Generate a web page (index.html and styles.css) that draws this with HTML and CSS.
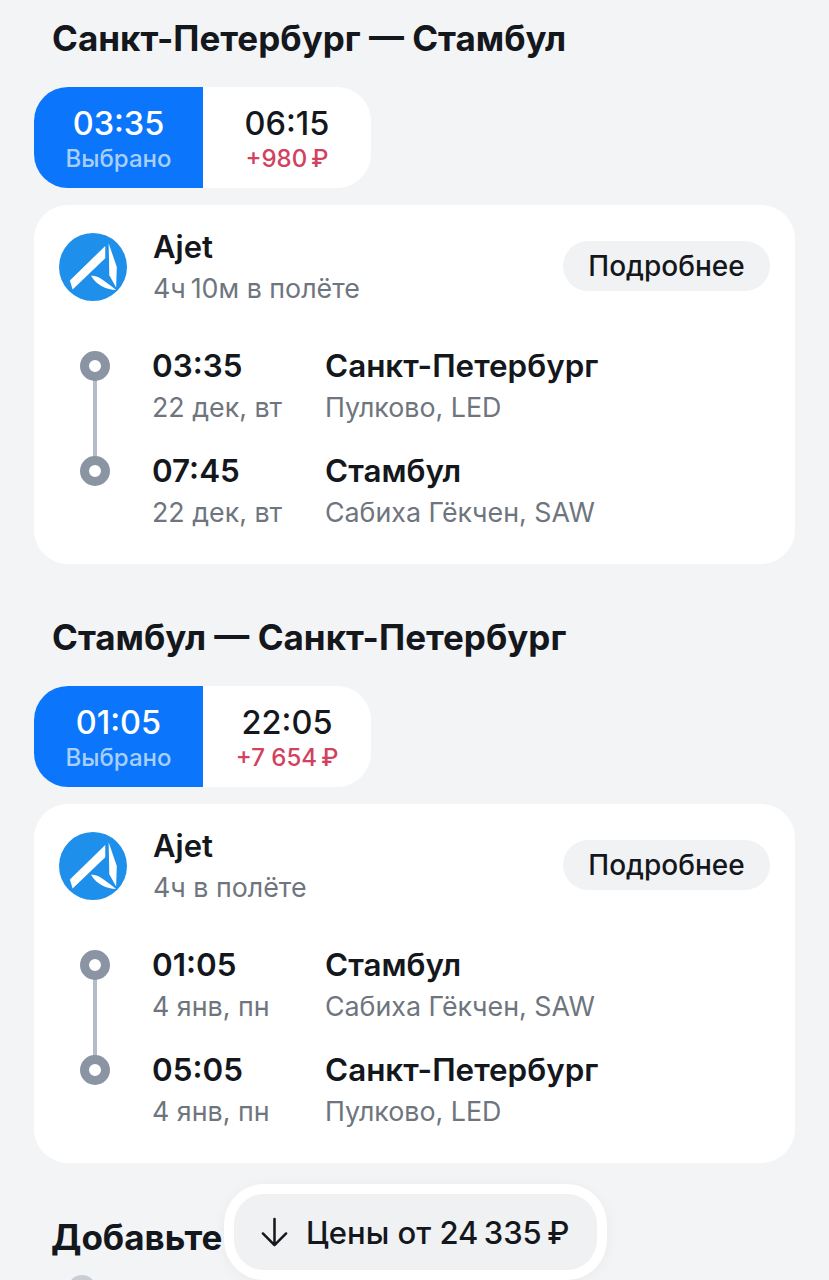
FILE: index.html
```html
<!DOCTYPE html>
<html lang="ru">
<head>
    <meta charset="UTF-8">
    <meta name="viewport" content="width=device-width, initial-scale=1.0">
    <title>Перелёт</title>
    <link rel="stylesheet" href="styles.css">
</head>
<body>
    <div id="page">
        <section class="leg">
            <h2 class="leg-title">Санкт-Петербург — Стамбул</h2>
            <div class="switch">
                <div class="option selected">
                    <span class="option-time">03:35</span>
                    <span class="option-note">Выбрано</span>
                </div>
                <div class="option">
                    <span class="option-time">06:15</span>
                    <span class="option-note extra">+980&thinsp;₽</span>
                </div>
            </div>
            <div class="card">
                <div class="card-head">
                    <svg class="logo" viewBox="0 0 100 100">
                        <circle cx="50" cy="50" r="50" fill="#1e8fea"/>
                        <path d="M16 70 68 19V37L20 83Z" fill="#fff"/>
                        <path d="M73 15 85 50 84 80 74 62Z" fill="#fff"/>
                        <path d="M47 63C55 62 62 66 84 84 70 83 56 78 47 63Z" fill="#fff"/>
                    </svg>
                    <div class="airline">
                        <div class="airline-name">Ajet</div>
                        <div class="muted">4ч&thinsp;10м в полёте</div>
                    </div>
                    <button class="more">Подробнее</button>
                </div>
                <div class="route">
                    <div class="stop">
                        <span class="dot"></span>
                        <div>
                            <div class="strong">03:35</div>
                            <div class="muted">22 дек, вт</div>
                        </div>
                        <div>
                            <div class="strong">Санкт-Петербург</div>
                            <div class="muted">Пулково, LED</div>
                        </div>
                    </div>
                    <div class="stop">
                        <span class="dot"></span>
                        <div>
                            <div class="strong">07:45</div>
                            <div class="muted">22 дек, вт</div>
                        </div>
                        <div>
                            <div class="strong">Стамбул</div>
                            <div class="muted">Сабиха Гёкчен, SAW</div>
                        </div>
                    </div>
                </div>
            </div>
        </section>

        <section class="leg">
            <h2 class="leg-title">Стамбул — Санкт-Петербург</h2>
            <div class="switch">
                <div class="option selected">
                    <span class="option-time">01:05</span>
                    <span class="option-note">Выбрано</span>
                </div>
                <div class="option">
                    <span class="option-time">22:05</span>
                    <span class="option-note extra">+7 654&thinsp;₽</span>
                </div>
            </div>
            <div class="card">
                <div class="card-head">
                    <svg class="logo" viewBox="0 0 100 100">
                        <circle cx="50" cy="50" r="50" fill="#1e8fea"/>
                        <path d="M16 70 68 19V37L20 83Z" fill="#fff"/>
                        <path d="M73 15 85 50 84 80 74 62Z" fill="#fff"/>
                        <path d="M47 63C55 62 62 66 84 84 70 83 56 78 47 63Z" fill="#fff"/>
                    </svg>
                    <div class="airline">
                        <div class="airline-name">Ajet</div>
                        <div class="muted">4ч в полёте</div>
                    </div>
                    <button class="more">Подробнее</button>
                </div>
                <div class="route">
                    <div class="stop">
                        <span class="dot"></span>
                        <div>
                            <div class="strong">01:05</div>
                            <div class="muted">4 янв, пн</div>
                        </div>
                        <div>
                            <div class="strong">Стамбул</div>
                            <div class="muted">Сабиха Гёкчен, SAW</div>
                        </div>
                    </div>
                    <div class="stop">
                        <span class="dot"></span>
                        <div>
                            <div class="strong">05:05</div>
                            <div class="muted">4 янв, пн</div>
                        </div>
                        <div>
                            <div class="strong">Санкт-Петербург</div>
                            <div class="muted">Пулково, LED</div>
                        </div>
                    </div>
                </div>
            </div>
        </section>

        <h2 class="leg-title add-title">Добавьте</h2>
        <span class="add-dot"></span>

        <div class="price-pill">
            <svg class="arrow" viewBox="0 0 32 32" fill="none" stroke="#14171c" stroke-width="2.6" stroke-linecap="round" stroke-linejoin="round">
                <path d="M16 2V29M4 17 16 29 28 17"/>
            </svg>
            <span>Цены от 24&thinsp;335&thinsp;₽</span>
        </div>
    </div>
</body>
</html>
```

FILE: styles.css
```css
body {
    margin: 0;
    padding: 0;
    background-color: #f3f4f6;
    font-family: Inter, "Noto Sans", sans-serif;
    color: #14171c;
}

#page {
    position: relative;
    height: 1280px;
    overflow: hidden;
    padding: 0 34px;
    box-sizing: border-box;
}

.leg {
    padding-bottom: 35px;
}

.leg-title {
    margin: 0;
    padding: 15px 0 0 18px;
    height: 87px;
    box-sizing: border-box;
    font-size: 35px;
    line-height: 46px;
    font-weight: 700;
}

.switch {
    display: flex;
    width: 337px;
    height: 101px;
    border-radius: 34px;
    overflow: hidden;
    background-color: #fff;
}

.option {
    flex: 1;
    display: flex;
    flex-direction: column;
    align-items: center;
    justify-content: center;
    padding-top: 4px;
    box-sizing: border-box;
}

.option.selected {
    flex: 0 0 169px;
    background-color: #0b76fb;
    color: #fff;
}

.option-time {
    font-size: 32.5px;
    line-height: 38px;
    font-weight: 500;
}

.option-note {
    margin-top: 1px;
    font-size: 24px;
    line-height: 30px;
    font-weight: 500;
    color: #a8cffc;
}

.option-note.extra {
    color: #d2415f;
}

.card {
    margin-top: 17px;
    height: 359px;
    box-sizing: border-box;
    padding: 21px 25px 0;
    background-color: #fff;
    border-radius: 34px;
}

.card-head {
    display: flex;
    align-items: center;
}

.logo {
    width: 68px;
    height: 68px;
    margin-bottom: 1px;
    flex-shrink: 0;
}

.airline {
    flex: 1;
    margin-left: 26px;
}

.airline-name {
    font-size: 31px;
    line-height: 42px;
    font-weight: 600;
}

.muted {
    font-size: 26.8px;
    line-height: 40px;
    color: #6f757e;
}

.more {
    width: 207px;
    height: 50px;
    margin-bottom: 2px;
    border: none;
    border-radius: 25px;
    background-color: #f1f2f4;
    color: #14171c;
    font-family: inherit;
    font-size: 28px;
    font-weight: 500;
    padding: 0;
}

.route {
    margin-top: 37px;
}

.stop {
    position: relative;
    display: grid;
    grid-template-columns: 173px 1fr;
    height: 105px;
    padding-left: 93px;
}

.stop .strong {
    font-size: 31.4px;
    line-height: 42px;
    font-weight: 600;
}

.dot {
    position: absolute;
    left: 21px;
    top: 6px;
    width: 12px;
    height: 12px;
    border: 9px solid #8a94a3;
    border-radius: 50%;
    background-color: #fff;
    z-index: 1;
}

.stop:first-child::before {
    content: "";
    position: absolute;
    left: 34px;
    top: 30px;
    width: 4px;
    height: 85px;
    background-color: #b4bcc9;
}

.add-title {
    padding-left: 17px;
    padding-top: 16px;
}

.add-dot {
    display: block;
    width: 28px;
    height: 28px;
    margin: -10px 0 0 34px;
    border-radius: 50%;
    background-color: #c9ced6;
}

/* floating price button sits over the page */
.price-pill {
    position: absolute;
    left: 234px;
    top: 1194px;
    width: 363px;
    height: 76px;
    box-sizing: border-box;
    display: flex;
    align-items: center;
    gap: 16px;
    padding-left: 25px;
    border-radius: 30px;
    background-color: #f0f1f3;
    box-shadow: 0 0 0 10px #fff, 0 2px 16px 8px rgba(0, 0, 0, 0.06);
    font-size: 31px;
    font-weight: 500;
}

.arrow {
    width: 31px;
    height: 31px;
    flex-shrink: 0;
}
```
